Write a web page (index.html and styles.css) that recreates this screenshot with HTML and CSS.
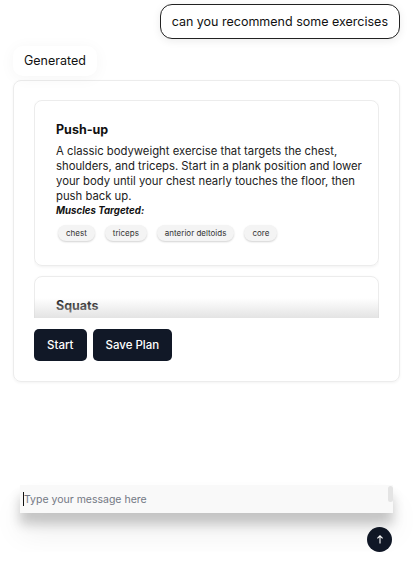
FILE: index.html
```html
<!DOCTYPE html>
<html lang="en">
<head>
    <meta charset="UTF-8">
    <meta name="viewport" content="width=device-width, initial-scale=1.0">
    <title>Workout Chat</title>
    <link rel="stylesheet" href="styles.css">
</head>
<body>
    <div class="chat">
        <!-- User message -->
        <div class="user-row">
            <div class="bubble">can you recommend some exercises</div>
        </div>

        <!-- Generated plan -->
        <div class="label">Generated</div>
        <div class="plan">
            <div class="list">
                <div class="card">
                    <h3>Push-up</h3>
                    <p>A classic bodyweight exercise that targets the chest, shoulders, and triceps. Start in a plank position and lower your body until your chest nearly touches the floor, then push back up.</p>
                    <div class="muscles">Muscles Targeted:</div>
                    <div class="tags">
                        <span class="tag">chest</span>
                        <span class="tag">triceps</span>
                        <span class="tag">anterior deltoids</span>
                        <span class="tag">core</span>
                    </div>
                </div>
                <div class="card tall">
                    <h3>Squats</h3>
                </div>
                <div class="fade"></div>
            </div>
            <div class="actions">
                <button class="btn">Start</button>
                <button class="btn">Save Plan</button>
            </div>
        </div>
    </div>

    <!-- Message input -->
    <div class="composer">
        <div class="input">
            <span class="caret"></span>
            <span class="placeholder">Type your message here</span>
            <span class="scroll"></span>
        </div>
        <div class="send-row">
            <button class="send">
                <svg width="8" height="9" viewBox="0 0 8 9"><path d="M4 8.5V1M1.4 3.4L4 0.8 6.6 3.4" fill="none" stroke="#fff" stroke-width="1.1"/></svg>
            </button>
        </div>
    </div>
</body>
</html>
```

FILE: styles.css
```css
/* General */
body {
    margin: 0;
    padding: 0;
    background: #ffffff;
    font-family: Inter, 'Noto Sans', sans-serif;
    color: #111111;
}

.chat {
    padding: 4px 13px 0 13px;
}

/* User bubble */
.user-row {
    display: flex;
    justify-content: flex-end;
}
.bubble {
    height: 33px;
    line-height: 33px;
    padding: 0 11px;
    border: 1px solid #222;
    border-radius: 12px;
    font-size: 12.5px;
    box-shadow: 0 2px 8px rgba(0, 0, 0, 0.08);
}

/* Generated label */
.label {
    display: inline-block;
    margin-top: 7px;
    padding: 7px 11px;
    font-size: 12.5px;
    line-height: 16px;
    box-shadow: 0 2px 16px rgba(0, 0, 0, 0.045);
    border-radius: 10px;
}

.plan {
    margin-top: 4px;
    border: 1px solid #ececec;
    border-radius: 8px;
    padding: 19px 20px 20px 20px;
    box-shadow: 0 1px 3px rgba(0, 0, 0, 0.05);
}

.list {
    position: relative;
    height: 218px;
    overflow: hidden;
    display: flex;
    flex-direction: column;
    gap: 10px;
}
.fade {
    position: absolute;
    left: 0;
    right: 0;
    bottom: 0;
    height: 20px;
    background: linear-gradient(to bottom, rgba(230, 230, 230, 0), rgba(218, 218, 218, 0.75));
}

.card {
    flex-shrink: 0;
    border: 1px solid #ececec;
    border-radius: 8px;
    padding: 20px 16px 24px 21px;
    box-shadow: 0 1px 3px rgba(0, 0, 0, 0.06);
}
.card.tall {
    min-height: 120px;
}
.card h3 {
    margin: 0 0 5px 0;
    font-size: 12.5px;
    line-height: 18px;
    font-weight: 700;
}
.card p {
    margin: 0;
    font-size: 11.3px;
    line-height: 15px;
    color: #222;
}
.muscles {
    font-size: 9.7px;
    font-weight: 700;
    font-style: italic;
    line-height: 14px;
}
.tags {
    display: flex;
    gap: 10px;
    margin-top: 7px;
    padding-left: 2px;
}
.tag {
    font-size: 8px;
    line-height: 16px;
    padding: 0 8px;
    border-radius: 10px;
    background: #f4f4f4;
    color: #333;
    box-shadow: 0 1px 2px rgba(0, 0, 0, 0.18);
}

/* Buttons */
.actions {
    display: flex;
    gap: 6px;
    margin-top: 11px;
}
.btn {
    display: flex;
    align-items: center;
    height: 32px;
    line-height: 16px;
    padding: 0 13px;
    background: #111827;
    color: #fff;
    border: none;
    border-radius: 5px;
    font-family: Inter, sans-serif;
    font-size: 11.5px;
    font-weight: 500;
    white-space: nowrap;
}

/* Composer */
.composer {
    margin-top: 103px;
    padding: 0 20px;
}
.input {
    position: relative;
    height: 28px;
    display: flex;
    align-items: center;
    background: #f9f9f9;
    box-shadow: 0 11px 12px rgba(0, 0, 0, 0.2), 0 20px 30px rgba(0, 0, 0, 0.07);
    padding-left: 3px;
}
.caret {
    width: 1px;
    height: 14px;
    background: #111;
}
.placeholder {
    font-size: 10.5px;
    color: #737884;
}
.scroll {
    position: absolute;
    right: 0;
    top: 1px;
    width: 5px;
    height: 16px;
    border-radius: 3px;
    background: #e4e4e4;
}
.send-row {
    display: flex;
    justify-content: flex-end;
    margin-top: 14px;
    margin-right: 1px;
}
.send {
    width: 25px;
    height: 25px;
    border-radius: 50%;
    border: none;
    background: #111827;
    display: flex;
    align-items: center;
    justify-content: center;
    padding: 0;
}
```
